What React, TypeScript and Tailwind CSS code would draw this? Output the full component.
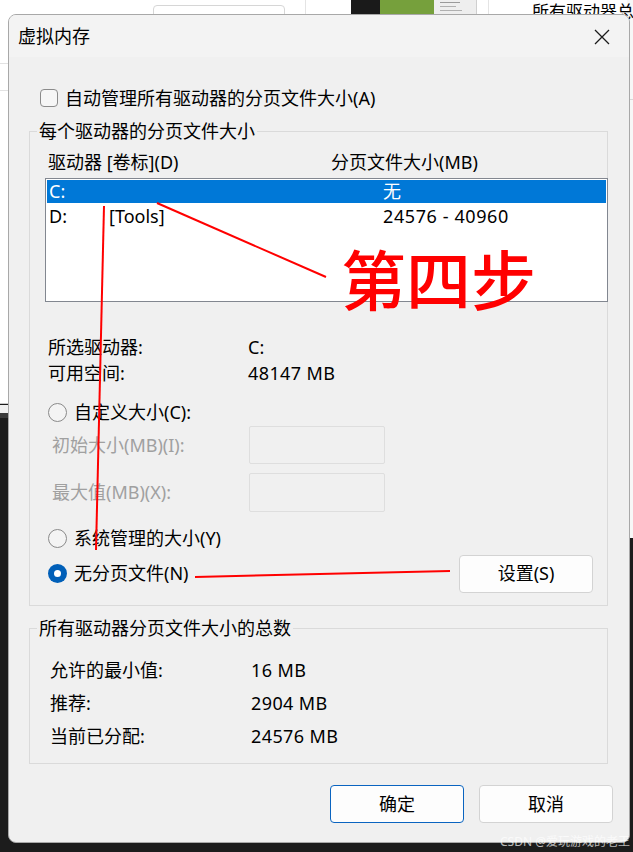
import React from "react";

const Radio = ({ checked }: { checked?: boolean }) =>
  checked ? (
    <span className="w-[19px] h-[19px] rounded-full bg-[#005fb8] flex items-center justify-center shrink-0">
      <span className="w-[7px] h-[7px] rounded-full bg-white" />
    </span>
  ) : (
    <span className="w-[19px] h-[19px] rounded-full border border-[#8a8a8a] bg-[#f4f4f4] shrink-0" />
  );

const Button = ({ label, primary }: { label: string; primary?: boolean }) => (
  <button
    className={
      primary
        ? "w-[134px] h-[38px] rounded-[4px] bg-[#fdfdfd] border border-[#0a64c0] text-[18px] text-black"
        : "w-[134px] h-[38px] rounded-[4px] bg-[#fdfdfd] border border-[#d3d3d3] text-[18px] text-black"
    }
  >
    {label}
  </button>
);

export default function App() {
  return (
    <div className="relative w-[633px] h-[852px] overflow-hidden bg-[#1c1c1c] font-[family-name:'Noto_Sans','Noto_Sans_CJK_SC',sans-serif]">
      {/* windows behind the dialog */}
      <div className="absolute left-0 top-0 w-[633px] h-[100px] bg-white" />
      <div className="absolute left-0 top-0 w-[8px] h-[404px] bg-white border-b border-[#c8c8c8]" />
      <div className="absolute left-0 top-[405px] w-[8px] h-[8px] bg-[#f0f0f0]" />
      <div className="absolute left-0 top-[413px] w-[8px] h-[5px] bg-[#3a3a3a]" />
      <div className="absolute left-0 top-[63px] w-[8px] h-px bg-[#e2e2e2]" />
      <div className="absolute left-0 top-[90px] w-[8px] h-px bg-[#e2e2e2]" />
      <div className="absolute right-0 top-0 w-[6px] h-[538px] bg-[#f7f7f7]" />
      <div className="absolute right-0 top-[99px] w-[6px] h-px bg-[#d8d8d8]" />
      <div className="absolute left-[153px] top-[5px] w-[132px] h-[30px] rounded-[4px] border border-[#d6d6d6] bg-white" />
      <div className="absolute left-[305px] top-0 w-px h-[20px] bg-[#e4e4e4]" />
      <div className="absolute left-[351px] top-0 w-[29px] h-[20px] bg-[#1a1a1a]" />
      <div className="absolute left-[380px] top-0 w-[54px] h-[20px] bg-[#76a03c]" />
      <div className="absolute left-[434px] top-0 w-[43px] h-[20px] bg-[#eeeeee] border-r border-[#cfcfcf] flex flex-col gap-[3px] pt-[2px] pl-[6px]">
        <span className="w-[20px] h-px bg-[#9a9a9a]" />
        <span className="w-[16px] h-px bg-[#b0b0b0]" />
        <span className="w-[22px] h-px bg-[#b0b0b0]" />
      </div>
      <div className="absolute left-[488px] top-0 w-px h-[20px] bg-[#e4e4e4]" />
      <div className="absolute left-[532px] top-[1px] text-[17px] leading-[22px] text-black whitespace-nowrap">
        所有驱动器总
      </div>

      {/* dialog */}
      <div className="absolute left-[8px] top-[14px] w-[622px] h-[829px] rounded-[8px] border border-[#a8a8a8] bg-[#f0f0f0] overflow-hidden flex flex-col text-[18px] text-black">
        <div className="h-[42px] bg-[#f3f3f3] flex items-center justify-between pl-[9px] pr-[19px] shrink-0">
          <span className="leading-[26px]">虚拟内存</span>
          <svg width="16" height="16" viewBox="0 0 16 16" className="mt-[1px]">
            <path d="M1 1 L15 15 M15 1 L1 15" stroke="#1b1b1b" strokeWidth="1.3" fill="none" />
          </svg>
        </div>

        <div className="flex flex-col px-[20px]">
          <div className="mt-[28px] h-[26px] flex items-center pl-[11px] gap-[7px]">
            <span className="w-[18px] h-[18px] rounded-[4px] border border-[#8b8b8b] bg-[#f6f6f6] shrink-0" />
            <span className="leading-[26px]">自动管理所有驱动器的分页文件大小(A)</span>
          </div>

          {/* per-drive group */}
          <fieldset className="mt-[7px] w-[579px] min-w-0 border border-[#dadada] pb-[12px]">
            <legend className="ml-[7px] px-[2px] leading-[26px]">每个驱动器的分页文件大小</legend>
            <div className="mt-[5px] h-[26px] flex items-center pl-[18px]">
              <span className="w-[283px]">驱动器 [卷标](D)</span>
              <span>分页文件大小(MB)</span>
            </div>
            <div className="mt-[3px] ml-[15px] w-[563px] h-[124px] bg-white border border-[#828790] p-px flex flex-col">
              <div className="h-[23px] bg-[#0078d7] text-white flex items-center pl-[2px]">
                <span className="w-[334px]">C:</span>
                <span>无</span>
              </div>
              <div className="h-[27px] flex items-center pl-[2px]">
                <span className="w-[60px]">D:</span>
                <span className="w-[274px]">[Tools]</span>
                <span className="tracking-[0.6px]">24576 - 40960</span>
              </div>
            </div>

            <div className="mt-[32px] h-[26px] flex items-center pl-[18px]">
              <span className="w-[200px]">所选驱动器:</span>
              <span>C:</span>
            </div>
            <div className="h-[26px] flex items-center pl-[18px]">
              <span className="w-[200px]">可用空间:</span>
              <span className="tracking-[0.4px]">48147 MB</span>
            </div>

            <div className="mt-[13px] h-[26px] flex items-center pl-[18px] gap-[7px]">
              <Radio />
              <span>自定义大小(C):</span>
            </div>
            <div className="mt-px h-[38px] flex items-center pl-[22px] text-[#a0a0a0]">
              <span className="w-[197px]">初始大小(MB)(I):</span>
              <span className="w-[136px] h-[38px] border border-[#dedede] rounded-[2px] bg-[#f0f0f0]" />
            </div>
            <div className="mt-[9px] h-[39px] flex items-center pl-[22px] text-[#a0a0a0]">
              <span className="w-[197px]">最大值(MB)(X):</span>
              <span className="w-[136px] h-[39px] border border-[#dedede] rounded-[2px] bg-[#f0f0f0]" />
            </div>

            <div className="mt-[13px] h-[26px] flex items-center pl-[18px] gap-[7px]">
              <Radio />
              <span>系统管理的大小(Y)</span>
            </div>
            <div className="mt-[3px] h-[39px] flex items-center pl-[18px] pr-[14px] gap-[7px]">
              <Radio checked />
              <span>无分页文件(N)</span>
              <span className="ml-auto">
                <Button label="设置(S)" />
              </span>
            </div>
          </fieldset>

          {/* totals group */}
          <fieldset className="mt-[9px] w-[579px] min-w-0 border border-[#dadada] pb-[10px]">
            <legend className="ml-[7px] px-[2px] leading-[26px]">所有驱动器分页文件大小的总数</legend>
            <div className="mt-[13px] flex flex-col pl-[20px]">
              <div className="h-[33px] flex items-center">
                <span className="w-[201px]">允许的最小值:</span>
                <span className="tracking-[0.4px]">16 MB</span>
              </div>
              <div className="h-[33px] flex items-center">
                <span className="w-[201px]">推荐:</span>
                <span className="tracking-[0.4px]">2904 MB</span>
              </div>
              <div className="h-[33px] flex items-center">
                <span className="w-[201px]">当前已分配:</span>
                <span className="tracking-[0.4px]">24576 MB</span>
              </div>
            </div>
          </fieldset>

          <div className="mt-[21px] flex justify-end gap-[15px] mr-[-4px]">
            <Button label="确定" primary />
            <Button label="取消" />
          </div>
        </div>
      </div>

      {/* red annotations */}
      <svg className="absolute left-0 top-0 pointer-events-none" width="633" height="852">
        <line x1="157" y1="203" x2="326" y2="277" stroke="#ff0000" strokeWidth="2" />
        <line x1="104" y1="206" x2="96" y2="550" stroke="#ff0000" strokeWidth="2" />
        <line x1="195" y1="577" x2="450" y2="571" stroke="#ff0000" strokeWidth="2" />
      </svg>
      <div className="absolute left-[341px] top-[240px] text-[65px] leading-[74px] text-[#ff0000] font-medium whitespace-nowrap font-[family-name:'Noto_Sans_CJK_SC',sans-serif]">
        第四步
      </div>
      <div className="absolute right-[3px] top-[834px] text-[12px] leading-[16px] text-white/70 whitespace-nowrap">
        CSDN @爱玩游戏的老王
      </div>
    </div>
  );
}
